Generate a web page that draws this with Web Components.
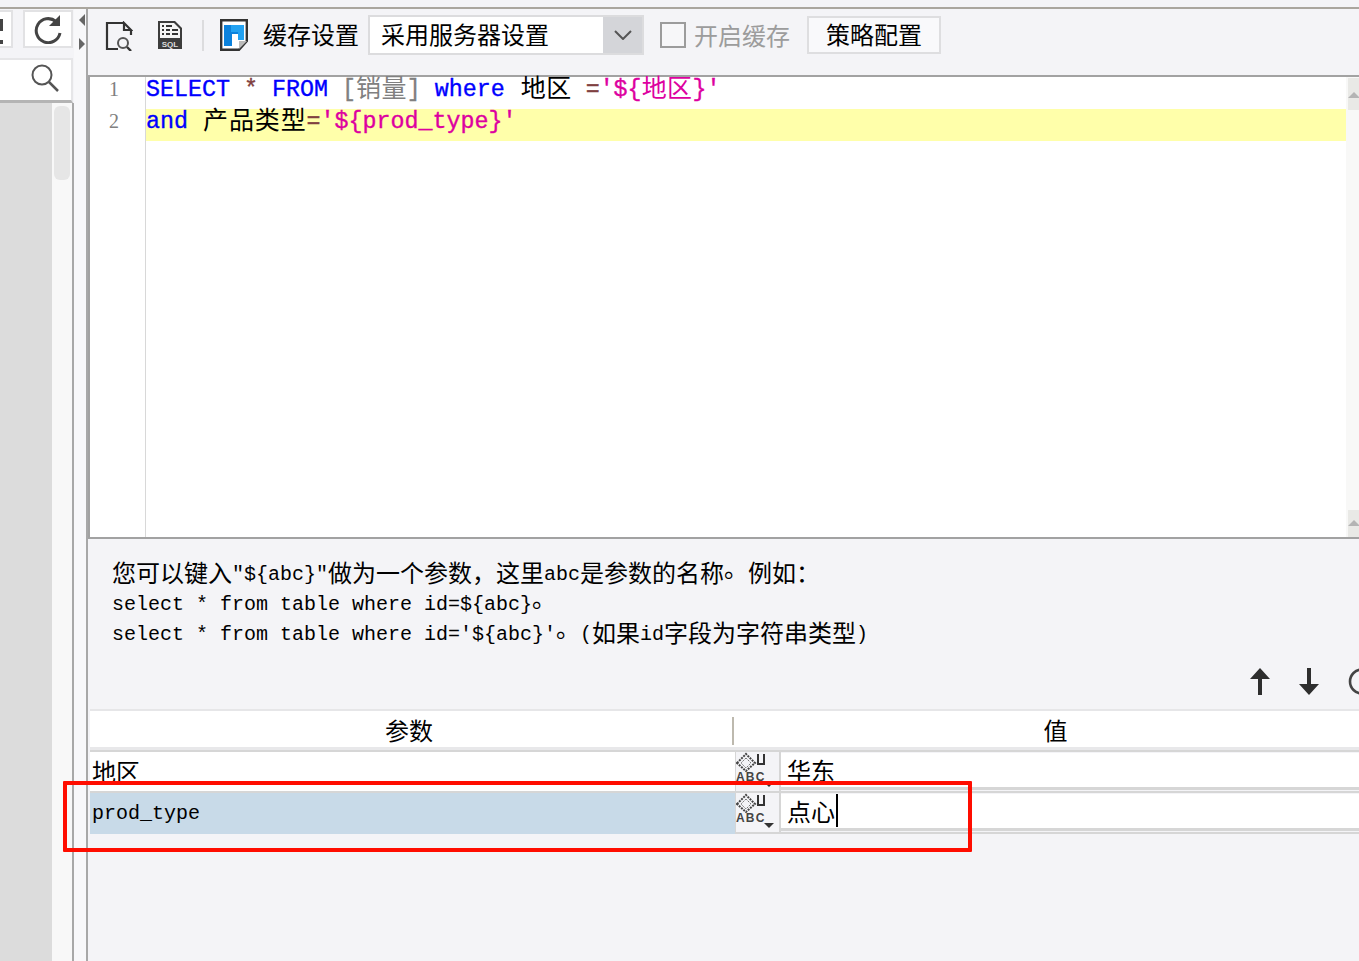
<!DOCTYPE html>
<html lang="zh">
<head>
<meta charset="utf-8">
<title>SQL</title>
<style>
  html, body { margin: 0; background: #f4f4f7; }
</style>
</head>
<body>
<app-shell>
  <side-panel slot="side"></side-panel>
  <query-toolbar></query-toolbar>
  <sql-editor></sql-editor>
  <param-hint></param-hint>
  <param-actions></param-actions>
  <param-table>
    <param-row name="地区" value="华东"></param-row>
    <param-row name="prod_type" value="点心" selected></param-row>
  </param-table>
</app-shell>

<script>
const CJK = '"Noto Sans CJK SC", sans-serif';
const MONO = '"Liberation Mono", "Noto Sans CJK SC", monospace';

class AppShell extends HTMLElement {
  constructor() {
    super();
    this.attachShadow({ mode: "open" });
  }

  connectedCallback() {
    this.shadowRoot.innerHTML = `
      <style>
        :host {
          display: block;
          position: relative;
          width: 1359px;
          height: 961px;
          overflow: hidden;
          background: #f4f4f7;
          color: #000;
          font: 24px ${CJK};
        }
        .cols {
          display: grid;
          grid-template-columns: 74px 12px 1fr;
          height: 952px;
          margin-top: 7px;
          border-top: 2px solid #aaa69e;
        }
        .split {
          display: flex;
          flex-direction: column;
          align-items: center;
          gap: 12px;
          padding-top: 5px;
          background: #f8f8fa;
        }
        .split svg { display: block; margin-left: 3px; }
        main {
          display: flex;
          flex-direction: column;
          min-width: 0;
          border-left: 2px solid #a8a8a8;
        }
        .mark {
          position: absolute;
          left: 63px;
          top: 781px;
          width: 901px;
          height: 63px;
          border: 4px solid #ff0d00;
          border-radius: 1px;
        }
      </style>
      <div class="cols">
        <slot name="side"></slot>
        <div class="split">
          <svg width="6" height="12"><path d="M6 0V12L0 6Z" fill="#666"/></svg>
          <svg width="6" height="12"><path d="M0 0V12L6 6Z" fill="#666"/></svg>
        </div>
        <main><slot></slot></main>
      </div>
      <div class="mark"></div>
    `;
  }
}

class SidePanel extends HTMLElement {
  constructor() {
    super();
    this.attachShadow({ mode: "open" });
  }

  connectedCallback() {
    this.shadowRoot.innerHTML = `
      <style>
        :host {
          display: flex;
          flex-direction: column;
          height: 100%;
          min-height: 0;
        }
        .tools { display: flex; gap: 10px; height: 38px; margin-top: 1px; }
        .box {
          box-sizing: border-box;
          background: #fff;
          border: 2px solid #e2e2e4;
        }
        .warn { width: 13px; border-left: 0; }
        .warn svg, .redo svg, .search svg { display: block; }
        .redo { width: 50px; display: grid; place-items: center; }
        .search {
          height: 45px;
          width: 73px;
          margin-top: 10px;
          box-sizing: border-box;
          background: #fff;
          border-top: 2px solid #e6e6e8;
          border-right: 2px solid #e6e6e8;
          border-bottom: 3px solid #b4b4b4;
          padding: 4px 0 0 30px;
        }
        .list {
          flex: 1;
          display: grid;
          grid-template-columns: 52px 20px;
          border-right: 2px solid #a8a8a8;
        }
        .items { background: #dcdcdc; }
        .track { background: #f8f8f8; padding: 3px 2px; }
        .thumb { height: 74px; background: #e6e6e6; border-radius: 6px; }
      </style>
      <div class="tools">
        <div class="box warn">
          <svg width="3" height="34"><path d="M0 7H3V19H0ZM0 28H3V32H0Z" fill="#444"/></svg>
        </div>
        <div class="box redo">
          <svg width="28" height="30" viewBox="0 0 28 30">
            <path d="M22 7.5A12 12 0 1 0 26 19" fill="none" stroke="#444" stroke-width="3"/>
            <path d="M26 1V12H15Z" fill="#444"/>
          </svg>
        </div>
      </div>
      <div class="search">
        <svg width="30" height="30" viewBox="0 0 30 30">
          <circle cx="12" cy="11" r="9.5" fill="none" stroke="#555" stroke-width="2"/>
          <path d="M19 18L28 27" stroke="#555" stroke-width="2.5"/>
        </svg>
      </div>
      <div class="list">
        <div class="items"></div>
        <div class="track"><div class="thumb"></div></div>
      </div>
    `;
  }
}

class QueryToolbar extends HTMLElement {
  constructor() {
    super();
    this.attachShadow({ mode: "open" });
  }

  connectedCallback() {
    this.shadowRoot.innerHTML = `
      <style>
        :host {
          display: flex;
          align-items: center;
          flex: none;
          box-sizing: border-box;
          height: 66px;
          padding: 0 0 14px 17px;
          white-space: nowrap;
          line-height: 1;
        }
        svg { display: block; flex: none; }
        .sep { width: 2px; height: 31px; background: #dcdcde; margin: 0 16px 0 19px; }
        .label { margin: 0 9px 2px 15px; }
        .select {
          box-sizing: border-box;
          display: flex;
          width: 276px;
          height: 40px;
          border: 2px solid #dcdcde;
          background: #fff;
        }
        .select span { flex: 1; padding: 5px 0 0 11px; }
        .select div {
          width: 39px;
          background: #d4d5d9;
          display: grid;
          place-items: center;
        }
        .check {
          box-sizing: border-box;
          width: 26px;
          height: 26px;
          margin: 0 8px 0 16px;
          border: 2px solid #9c9c9c;
          background: #f7f7f9;
        }
        .off { color: #9c9c9c; }
        .btn {
          box-sizing: border-box;
          width: 134px;
          height: 38px;
          margin-left: 17px;
          padding-top: 4px;
          text-align: center;
          background: #f9f9fb;
          border: 2px solid #dedee0;
        }
      </style>
      <svg width="28" height="30" viewBox="0 0 28 30" style="margin-top:1px">
        <path d="M19 2H2V28H13M19 2V9H26L19 2ZM26 9V14" fill="none" stroke="#333" stroke-width="2.2"/>
        <circle cx="18" cy="22" r="5" fill="none" stroke="#555" stroke-width="2"/>
        <path d="M22 26L26 30" stroke="#333" stroke-width="2.4"/>
      </svg>
      <svg width="26" height="28" viewBox="0 0 26 28" style="margin-left:24px">
        <path d="M1 0H18L25 7V28H1Z" fill="#3c3c3c"/>
        <path d="M3 2H17L23 8V17H3Z" fill="#f4f4f4"/>
        <path d="M5 4H7V6H5ZM9 4H15V6H9ZM5 8H7V10H5ZM9 8H13V10H9ZM15 8H21V10H15ZM5 12H7V14H5ZM9 12H13V14H9ZM15 12H21V14H15Z" fill="#333"/>
        <text x="13" y="26" text-anchor="middle" font-family="Liberation Sans" font-weight="700" font-size="8" fill="#ddd">SQL</text>
      </svg>
      <div class="sep"></div>
      <svg width="28" height="32" viewBox="0 0 28 32">
        <path d="M1.2 1.2H26.8V22L19 30.8H1.2Z" fill="#fff" stroke="#333" stroke-width="2.4"/>
        <path d="M4 6H24V21H18V15H12V27H4Z" fill="#0c82dc"/>
        <path d="M11 6H24V21H18V13H11Z" fill="#22a2f2"/>
        <path d="M19 30V22H27Z" fill="#bbb"/>
      </svg>
      <span class="label">缓存设置</span>
      <div class="select">
        <span>采用服务器设置</span>
        <div>
          <svg width="18" height="10" viewBox="0 0 18 10"><path d="M1 1L9 9L17 1" fill="none" stroke="#555" stroke-width="2"/></svg>
        </div>
      </div>
      <div class="check"></div>
      <span class="off">开启缓存</span>
      <div class="btn">策略配置</div>
    `;
  }
}

class SqlEditor extends HTMLElement {
  constructor() {
    super();
    this.attachShadow({ mode: "open" });
  }

  connectedCallback() {
    this.shadowRoot.innerHTML = `
      <style>
        :host {
          display: flex;
          flex: none;
          box-sizing: border-box;
          height: 464px;
          border-top: 2px solid #a2a2a2;
          border-bottom: 2px solid #a2a2a2;
          border-left: 2px solid #a2a2a2;
          background: #fff;
        }
        .gutter {
          box-sizing: border-box;
          width: 56px;
          border-right: 1px solid #d8d8d8;
          padding-left: 19px;
          font: 20px "Liberation Serif", serif;
          color: #808080;
        }
        .gutter div { height: 32px; line-height: 25px; }
        .code {
          width: 1200px;
          font: 23.33px ${MONO};
          color: #000;
          -webkit-text-stroke: .35px;
        }
        .line { height: 32px; line-height: 27px; white-space: pre; }
        .line.on { background: #ffffaa; }
        i { font: 25px/0 ${CJK}; letter-spacing: .4px; vertical-align: -1px; -webkit-text-stroke: 0; }
        .gap { margin-left: 2px; }
        .wide { margin-left: 1px; letter-spacing: .9px; }
        .kw { color: #0000ff; }
        .op { color: #804040; }
        .dim { color: #808080; }
        .str { color: #dd00a0; }
        .bar {
          flex: 1;
          display: flex;
          flex-direction: column;
          justify-content: space-between;
          padding-left: 2px;
          background: #f8f8f7;
        }
        .bar svg { display: block; background: #e9e9e6; }
      </style>
      <div class="gutter"><div>1</div><div>2</div></div>
      <div class="code">
        <div class="line"><span class="kw">SELECT</span> <span class="op">*</span> <span class="kw">FROM</span> <span class="dim">[<i>销量</i>]</span> <span class="kw">where</span> <i class="gap">地区</i> <span class="op">=</span><span class="str">'\${<i>地区</i>}'</span></div>
        <div class="line on"><span class="kw">and</span> <i class="wide">产品类型</i><span class="op">=</span><span class="str">'\${prod_type}'</span></div>
      </div>
      <div class="bar">
        <svg width="11" height="32" style="margin-top:1px"><path d="M6 14L12 20H0Z" fill="#b4b4b4"/></svg>
        <svg width="11" height="27"><path d="M6 10L12 16H0Z" fill="#b4b4b4"/></svg>
      </div>
    `;
  }
}

class ParamHint extends HTMLElement {
  constructor() {
    super();
    this.attachShadow({ mode: "open" });
  }

  connectedCallback() {
    this.shadowRoot.innerHTML = `
      <style>
        :host {
          display: block;
          flex: none;
          padding: 21px 0 0 24px;
          font: 20px/30px ${MONO};
        }
        div { height: 30px; white-space: pre; }
        i { font: 24px/0 ${CJK}; vertical-align: -2px; }
        .dot { vertical-align: 3px; }
      </style>
      <div><i>您可以键入</i>"\${abc}"<i>做为一个参数，这里</i>abc<i>是参数的名称</i><i class="dot">。</i><i>例如：</i></div>
      <div>select * from table where id=\${abc}<i class="dot">。</i></div>
      <div>select * from table where id='\${abc}'<i class="dot">。</i>(<i>如果</i>id<i>字段为字符串类型</i>)</div>
    `;
  }
}

class ParamActions extends HTMLElement {
  constructor() {
    super();
    this.attachShadow({ mode: "open" });
  }

  connectedCallback() {
    this.shadowRoot.innerHTML = `
      <style>
        :host {
          display: flex;
          flex: none;
          gap: 29px;
          box-sizing: border-box;
          height: 59px;
          padding: 18px 0 0 1162px;
          overflow: hidden;
        }
        svg { display: block; flex: none; }
      </style>
      <svg width="20" height="27" viewBox="0 0 20 27"><path d="M10 0L20 11H12V27H8V11H0Z" fill="#2e2e2e"/></svg>
      <svg width="20" height="27" viewBox="0 0 20 27"><path d="M10 27L20 16H12V0H8V16H0Z" fill="#2e2e2e"/></svg>
      <svg width="28" height="27" viewBox="0 0 28 27"><circle cx="14" cy="13.5" r="12" fill="none" stroke="#444" stroke-width="2.6"/></svg>
    `;
  }
}

class ParamTable extends HTMLElement {
  constructor() {
    super();
    this.attachShadow({ mode: "open" });
  }

  connectedCallback() {
    this.shadowRoot.innerHTML = `
      <style>
        :host { display: block; flex: none; margin-left: 2px; width: 1290px; }
        .head {
          display: grid;
          grid-template-columns: 643px 644px;
          height: 36px;
          background: #fff;
          border-top: 2px solid #e6e6e8;
          border-bottom: 3px solid #e8e8ea;
          line-height: 38px;
          text-align: center;
        }
        .head div:first-child { padding-right: 5px; }
        .rule { display: block; width: 2px; height: 28px; margin: 6px 0 0 -1px; background: #bdb9ae; float: left; }
      </style>
      <div class="head">
        <div>参数</div>
        <div><span class="rule"></span>值</div>
      </div>
      <slot></slot>
    `;
  }
}

class ParamRow extends HTMLElement {
  constructor() {
    super();
    this.attachShadow({ mode: "open" });
  }

  connectedCallback() {
    const name = this.getAttribute("name");
    const value = this.getAttribute("value");
    const selected = this.hasAttribute("selected");

    this.shadowRoot.innerHTML = `
      <style>
        :host {
          display: grid;
          grid-template-columns: 645px 46px 1fr;
          height: 39px;
          border-top: 2px solid #d6d6d6;
          ${selected ? "border-bottom: 2px solid #d6d6d6;" : ""}
          background: #f4f4f7;
          line-height: 38px;
        }
        .name {
          padding-left: 2px;
          background: ${selected ? "#c8dae8" : "#fff"};
          font: ${name === "prod_type" ? "20px/41px " + MONO : "24px/38px " + CJK};
        }
        .kind {
          box-sizing: border-box;
          border-left: 1px solid #d6d6d6;
          border-right: 2px solid #d6d6d6;
        }
        .kind svg { display: block; }
        .value {
          box-sizing: border-box;
          height: 37px;
          padding-left: 6px;
          background: #fff;
          border-bottom: 3px solid #d6d6d6;
          line-height: 34px;
          margin-top: 1px;
          white-space: nowrap;
        }
        .caret {
          display: inline-block;
          width: 2px;
          height: 33px;
          background: #000;
          vertical-align: top;
          margin-left: 1px;
        }
      </style>
      <div class="name">${name}</div>
      <div class="kind">
        <svg width="43" height="39" viewBox="0 0 43 39">
          <path d="M1 11L10 2L19 11L10 19Z" fill="none" stroke="#444" stroke-width="2" stroke-dasharray="2 1"/>
          <path d="M10 6L5 11L10 16L15 11Z" fill="none" stroke="#777" stroke-width="1" stroke-dasharray="2 1"/>
          <path d="M22 2V12H28V2" fill="none" stroke="#333" stroke-width="2"/>
          <text x="0" y="29" font-family="Liberation Sans" font-weight="700" font-size="12" letter-spacing="1.2" fill="#444">ABC</text>
          <path d="M28 30H38L33 35Z" fill="#333"/>
        </svg>
      </div>
      <div class="value">${value}${selected ? '<span class="caret"></span>' : ""}</div>
    `;
  }
}

customElements.define("app-shell", AppShell);
customElements.define("side-panel", SidePanel);
customElements.define("query-toolbar", QueryToolbar);
customElements.define("sql-editor", SqlEditor);
customElements.define("param-hint", ParamHint);
customElements.define("param-actions", ParamActions);
customElements.define("param-table", ParamTable);
customElements.define("param-row", ParamRow);
</script>
</body>
</html>
